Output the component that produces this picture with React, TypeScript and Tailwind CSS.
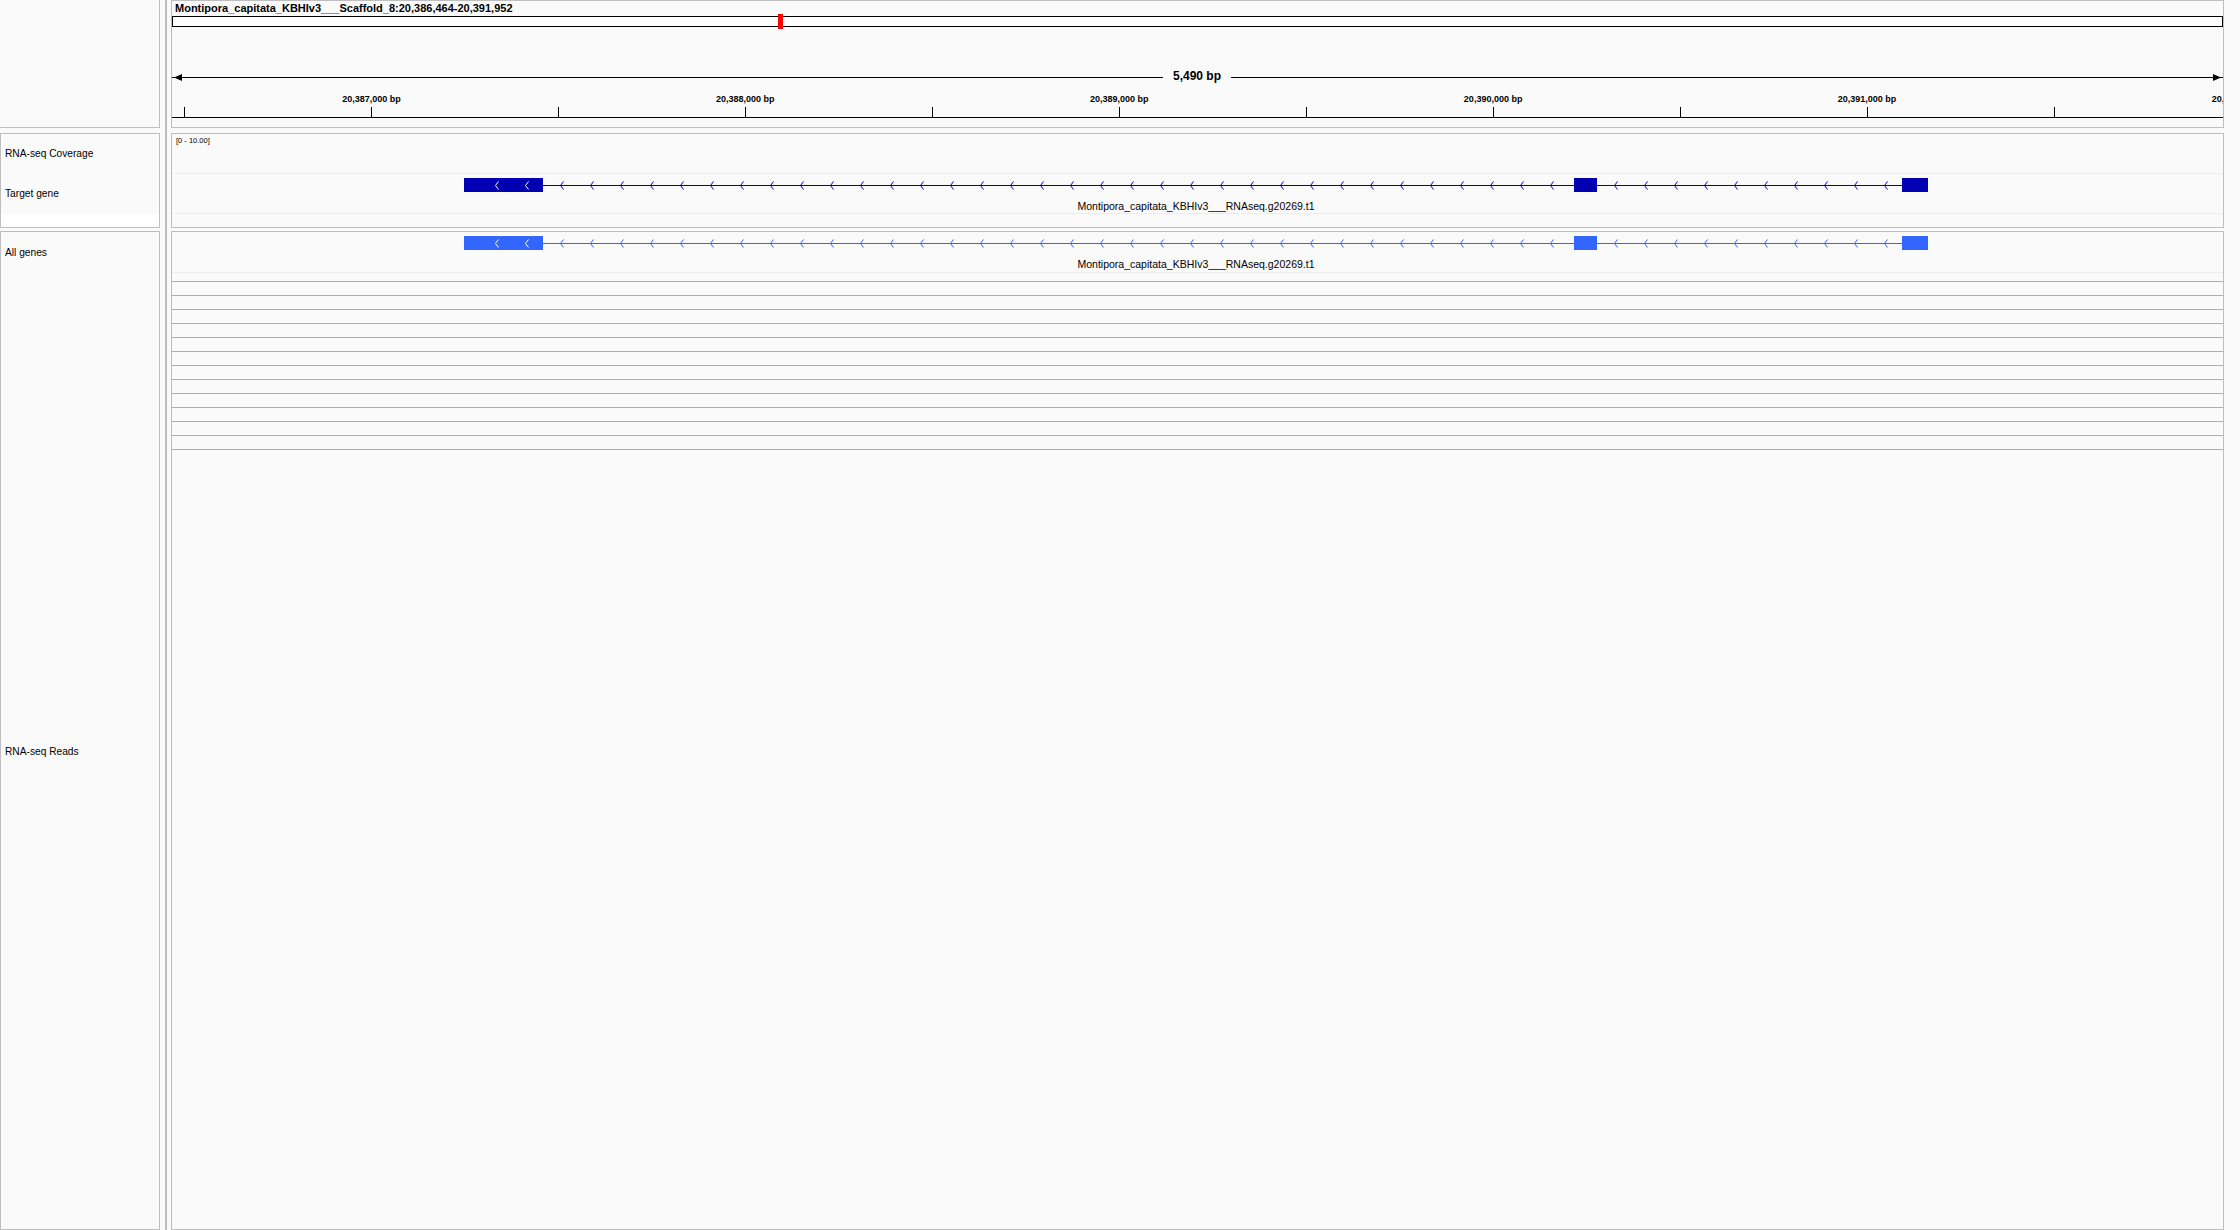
import React from "react";

// locus Montipora_capitata_KBHIv3___Scaffold_8:20,386,464-20,391,952
const START = 20386464;
const SCALE = 0.37391; // px per bp
const IN0 = 172; // page x of the data panels' inner edge

const bpX = (bp: number) => 171 + (bp - START) * SCALE - IN0;

const ticks: number[] = [];
for (let bp = 20386500; bp <= 20392000; bp += 500) ticks.push(bp);
const tickLabels = [20387000, 20388000, 20389000, 20390000, 20391000, 20392000];

// exons in page x
const exons = [
  [464, 543],
  [1574, 1597],
  [1902, 1928],
];
const intronTips: number[] = [];
for (let x = 560; x <= 1550; x += 30) intronTips.push(x);
for (let x = 1614; x <= 1884; x += 30) intronTips.push(x);
const exonTips = [495, 525];

function Gene({ color }: { color: string }) {
  const left = exons[0][0] - IN0;
  const right = exons[2][1] - IN0;
  return (
    <>
      <svg className="absolute left-0 top-0" width={2051} height={40}>
        <line x1={left} x2={right} y1={11.5} y2={11.5} stroke={color} strokeWidth={1} />
        {intronTips.map((x) => (
          <path
            key={x}
            d={`M${x - IN0 + 3.5} 7.5 L${x - IN0 + 0.5} 11.5 L${x - IN0 + 3.5} 15.5`}
            fill="none"
            stroke={color}
            strokeWidth={1}
          />
        ))}
        {exons.map(([a, b]) => (
          <rect key={a} x={a - IN0} y={4} width={b - a} height={14} fill={color} />
        ))}
        {exonTips.map((x) => (
          <path
            key={x}
            d={`M${x - IN0 + 3.5} 7.5 L${x - IN0 + 0.5} 11.5 L${x - IN0 + 3.5} 15.5`}
            fill="none"
            stroke="#ffffff"
            strokeWidth={1}
          />
        ))}
      </svg>
      <div
        className="absolute top-[26px] -translate-x-1/2 whitespace-nowrap text-[10.5px] leading-[13px]"
        style={{ left: (left + right) / 2 }}
      >
        Montipora_capitata_KBHIv3___RNAseq.g20269.t1
      </div>
    </>
  );
}

export default function App() {
  return (
    <div className="flex h-[1230px] w-[2240px] overflow-hidden bg-[#fafafa] font-['Liberation_Sans',Arial,sans-serif] text-black">
      {/* track names */}
      <div className="flex w-[160px] shrink-0 flex-col">
        <div className="h-[128px] border-r border-b border-[#bebebe]" />
        <div className="mt-[5px] flex h-[96px] flex-col border border-[#bebebe] text-[10.2px]">
          <div className="flex h-[40px] items-center pl-[4px]">RNA-seq Coverage</div>
          <div className="flex h-[40px] items-center pl-[4px]">Target gene</div>
          <div className="flex-1 bg-white" />
        </div>
        <div className="mt-[3px] flex h-[1001px] flex-col border border-[#bebebe] text-[10.2px]">
          <div className="flex h-[41px] items-center pl-[4px]">All genes</div>
          <div className="flex flex-1 items-center pl-[4px]">RNA-seq Reads</div>
        </div>
      </div>

      <div className="w-[5px] shrink-0" />
      <div className="w-[2px] shrink-0 bg-[#bdbdbd]" />
      <div className="w-[4px] shrink-0" />

      {/* data panels */}
      <div className="flex w-[2053px] shrink-0 flex-col">
        {/* ruler header */}
        <div className="relative h-[128px] overflow-hidden border border-[#bebebe]">
          <div className="pt-px pl-[3px] text-[11px] font-bold leading-[13px]">
            Montipora_capitata_KBHIv3___Scaffold_8:20,386,464-20,391,952
          </div>
          <div className="relative mt-px h-[11px] border border-black bg-white">
            <div className="absolute left-[605px] top-[-3px] h-[15px] w-[5px] bg-[#ff0000]" />
          </div>
          <svg className="absolute left-0 top-0" width={2051} height={126}>
            <line x1={0} x2={991} y1={76.5} y2={76.5} stroke="#000" strokeWidth={1} />
            <line x1={1059} x2={2051} y1={76.5} y2={76.5} stroke="#000" strokeWidth={1} />
            <polygon points="2,76.5 10,73 10,80" fill="#000" />
            <polygon points="2049,76.5 2041,73 2041,80" fill="#000" />
            {ticks.map((bp) => {
              const x = Math.round(bpX(bp)) + 0.5;
              return <line key={bp} x1={x} x2={x} y1={106} y2={116} stroke="#000" strokeWidth={1} />;
            })}
            <line x1={0} x2={2051} y1={116.5} y2={116.5} stroke="#000" strokeWidth={1} />
          </svg>
          <div className="absolute left-[1025px] top-[68px] -translate-x-1/2 whitespace-nowrap text-[12px] font-bold leading-[15px]">
            5,490 bp
          </div>
          {tickLabels.map((bp) => (
            <div
              key={bp}
              className="absolute top-[92px] -translate-x-1/2 whitespace-nowrap text-[9px] font-bold leading-[12px]"
              style={{ left: bpX(bp) }}
            >
              {bp.toLocaleString("en-US")} bp
            </div>
          ))}
        </div>

        {/* coverage + target gene */}
        <div className="mt-[5px] flex h-[96px] flex-col border border-[#bebebe]">
          <div className="h-[40px] border-b border-[#ececec] pt-[2px] pl-[4px] text-[7.5px] leading-[10px]">
            [0 - 10.00]
          </div>
          <div className="relative h-[40px] border-b border-[#ececec]">
            <Gene color="#0000b2" />
          </div>
          <div className="flex-1" />
        </div>

        {/* all genes + reads */}
        <div className="mt-[3px] flex h-[1001px] flex-col border border-[#bebebe]">
          <div className="relative h-[41px] border-b border-[#ececec]">
            <Gene color="#3366ff" />
          </div>
          <div className="flex flex-col gap-[13px] pt-[8px]">
            {Array.from({ length: 13 }).map((_, i) => (
              <div key={i} className="h-px bg-[#8fbacd]" />
            ))}
          </div>
        </div>
      </div>

      <div className="flex-1" />
    </div>
  );
}
